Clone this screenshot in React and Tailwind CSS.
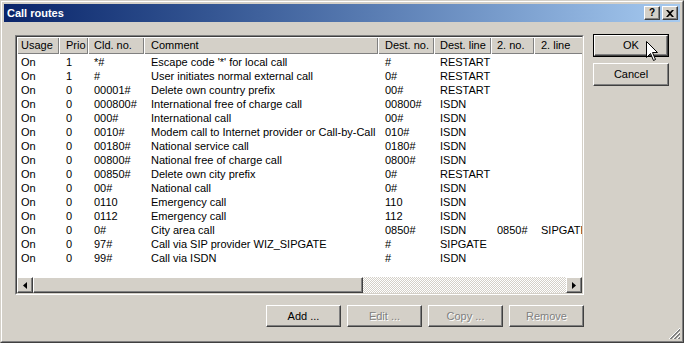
const cols = [
  { label: "Usage", cls: "w-[42px] pl-[4px]" },
  { label: "Prio", cls: "w-[29px] pl-[7px]" },
  { label: "Cld. no.", cls: "w-[56px] pl-[6px]" },
  { label: "Comment", cls: "w-[234px] pl-[7px]" },
  { label: "Dest. no.", cls: "w-[56px] pl-[7px]" },
  { label: "Dest. line", cls: "w-[57px] pl-[6px]" },
  { label: "2. no.", cls: "w-[43px] pl-[6px]" },
  { label: "2. line", cls: "w-[66px] pl-[7px]" },
];

const rows = [
  ["On", "1", "*#", "Escape code '*' for local call", "#", "RESTART", "", ""],
  ["On", "1", "#", "User initiates normal external call", "0#", "RESTART", "", ""],
  ["On", "0", "00001#", "Delete own country prefix", "00#", "RESTART", "", ""],
  ["On", "0", "000800#", "International free of charge call", "00800#", "ISDN", "", ""],
  ["On", "0", "000#", "International call", "00#", "ISDN", "", ""],
  ["On", "0", "0010#", "Modem call to Internet provider or Call-by-Call", "010#", "ISDN", "", ""],
  ["On", "0", "00180#", "National service call", "0180#", "ISDN", "", ""],
  ["On", "0", "00800#", "National free of charge call", "0800#", "ISDN", "", ""],
  ["On", "0", "00850#", "Delete own city prefix", "0#", "RESTART", "", ""],
  ["On", "0", "00#", "National call", "0#", "ISDN", "", ""],
  ["On", "0", "0110", "Emergency call", "110", "ISDN", "", ""],
  ["On", "0", "0112", "Emergency call", "112", "ISDN", "", ""],
  ["On", "0", "0#", "City area call", "0850#", "ISDN", "0850#", "SIPGATE"],
  ["On", "0", "97#", "Call via SIP provider WIZ_SIPGATE", "#", "SIPGATE", "", ""],
  ["On", "0", "99#", "Call via ISDN", "#", "ISDN", "", ""],
];

const raised =
  "border border-t-white border-l-white border-r-[#404040] border-b-[#404040] shadow-[inset_-1px_-1px_0_#808080]";

function Button({ children, disabled, className = "" }) {
  return (
    <div className={`${raised} bg-[#d4d0c8] flex items-center justify-center ${className}`}>
      <span className={disabled ? "text-[#808080] [text-shadow:1px_1px_0_#fff]" : "text-black"}>
        {children}
      </span>
    </div>
  );
}

function Arrow({ dir }) {
  return (
    <div className={`${raised} w-[16px] h-[16px] bg-[#d4d0c8] flex items-center justify-center shrink-0`}>
      <svg width="4" height="7" viewBox="0 0 4 7">
        {dir === "left" ? <path d="M4 0 L0 3.5 L4 7 Z" fill="#000" /> : <path d="M0 0 L4 3.5 L0 7 Z" fill="#000" />}
      </svg>
    </div>
  );
}

function RouteList() {
  return (
    <div className="w-[569px] h-[260px] border border-t-[#808080] border-l-[#808080] border-r-white border-b-white">
      <div className="w-full h-full border border-t-[#404040] border-l-[#404040] border-r-[#d4d0c8] border-b-[#d4d0c8] bg-white flex flex-col overflow-hidden">
        {/* header */}
        <div className="flex h-[17px] shrink-0 bg-[#d4d0c8]">
          {cols.map((c) => (
            <div
              key={c.label}
              className={`${c.cls} shrink-0 h-full leading-[16px] whitespace-nowrap overflow-hidden shadow-[inset_1px_1px_0_#fff,inset_-1px_-1px_0_#808080]`}
            >
              {c.label}
            </div>
          ))}
        </div>

        {/* rows */}
        <div className="flex-1 pt-[1px] overflow-hidden">
          {rows.map((r, i) => (
            <div key={i} className="flex h-[14px] leading-[14px]">
              {r.map((v, j) => (
                <div key={j} className={`${cols[j].cls} shrink-0 whitespace-nowrap overflow-hidden`}>
                  {v}
                </div>
              ))}
            </div>
          ))}
        </div>

        {/* horizontal scrollbar */}
        <div className="flex h-[16px] shrink-0">
          <Arrow dir="left" />
          <div className={`${raised} w-[330px] h-[16px] bg-[#d4d0c8] shrink-0`} />
          <div className="flex-1 bg-[repeating-conic-gradient(#d4d0c8_0_25%,#ffffff_0_50%)] bg-[length:2px_2px]" />
          <Arrow dir="right" />
        </div>
      </div>
    </div>
  );
}

export default function App() {
  return (
    <div className="relative w-[684px] h-[343px] border border-t-[#d4d0c8] border-l-[#d4d0c8] border-r-[#404040] border-b-[#404040] bg-[#d4d0c8] font-['Liberation_Sans',Arial,sans-serif] text-[11px] text-black select-none">
      <div className="w-full h-full border border-t-white border-l-white border-r-[#808080] border-b-[#808080] p-[2px] flex flex-col">
        {/* title bar */}
        <div className="h-[18px] shrink-0 flex items-center bg-linear-to-r from-[#0a246a] to-[#a6caf0] pl-[3px] pr-[2px]">
          <span className="text-white font-bold text-[11px] flex-1">Call routes</span>
          <div className={`${raised} w-[16px] h-[14px] bg-[#d4d0c8] flex items-center justify-center font-bold text-[10px] leading-none`}>
            ?
          </div>
          <div className={`${raised} w-[16px] h-[14px] bg-[#d4d0c8] flex items-center justify-center ml-[2px]`}>
            <svg width="8" height="7" viewBox="0 0 8 7">
              <path d="M0 0 L2 0 L4 2 L6 0 L8 0 L5 3.5 L8 7 L6 7 L4 5 L2 7 L0 7 L3 3.5 Z" fill="#000" />
            </svg>
          </div>
        </div>

        {/* body */}
        <div className="flex flex-1">
          <div className="flex flex-col pl-[11px] pt-[13px]">
            <RouteList />
            <div className="mt-[10px] flex justify-end gap-[6px]">
              <Button className="w-[75px] h-[22px]">Add ...</Button>
              <Button className="w-[75px] h-[22px]" disabled>Edit ...</Button>
              <Button className="w-[75px] h-[22px]" disabled>Copy ...</Button>
              <Button className="w-[75px] h-[22px]" disabled>Remove</Button>
            </div>
          </div>

          <div className="flex flex-col pl-[9px] pt-[12px] gap-[6px]">
            <div className="w-[76px] h-[23px] border border-black flex">
              <Button className="flex-1">OK</Button>
            </div>
            <Button className="w-[76px] h-[23px]">Cancel</Button>
          </div>
        </div>
      </div>

      {/* mouse pointer */}
      <svg className="absolute left-[645px] top-[40px]" width="13" height="21" viewBox="0 0 13 21">
        <path d="M0.5 0.5 L0.5 16.5 L4.5 12.5 L7.5 19.5 L9.5 18.5 L6.5 11.5 L11.5 11.5 Z" fill="#fff" stroke="#000" strokeWidth="1" />
      </svg>

      {/* size grip */}
      <svg className="absolute right-[3px] bottom-[3px]" width="12" height="12" viewBox="0 0 12 12">
        <path d="M12 1 L1 12 M12 5 L5 12 M12 9 L9 12" stroke="#fff" strokeWidth="1" />
        <path d="M12 2 L2 12 M12 3 L3 12 M12 6 L6 12 M12 7 L7 12 M12 10 L10 12 M12 11 L11 12" stroke="#808080" strokeWidth="1" />
      </svg>
    </div>
  );
}
